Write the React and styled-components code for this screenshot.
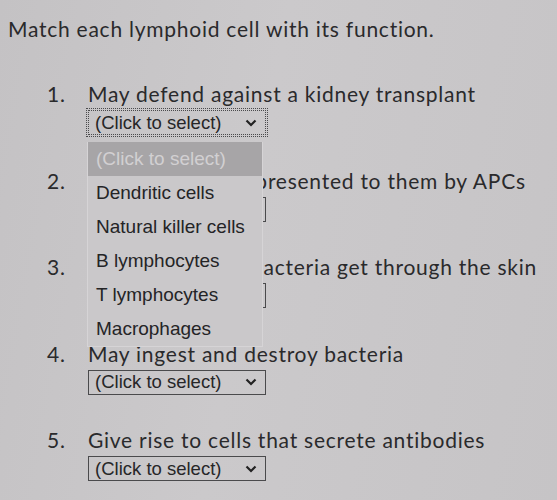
import React from 'react'
import styled, { createGlobalStyle } from 'styled-components'

const GlobalStyle = createGlobalStyle`
  html, body {
    margin: 0;
    padding: 0;
    background: #c7c5c7;
  }
`

const Page = styled.div`
  width: 557px;
  height: 500px;
  box-sizing: border-box;
  padding: 16px 0 0 8px;
  background: linear-gradient(100deg, #c4c2c4 0%, #cbc9cb 45%, #c6c4c6 100%);
  color: #2a2a2c;
  font-family: Lato, "Open Sans", sans-serif;
  overflow: hidden;
`

const Title = styled.h1`
  margin: 0;
  font-size: 21px;
  font-weight: 400;
  line-height: 26px;
  letter-spacing: 0.75px;
`

const List = styled.ol`
  list-style: none;
  margin: 39px 0 0 0;
  padding: 0 0 0 39px;
  display: flex;
  flex-direction: column;
  gap: 32.5px;
`

const Item = styled.li`
  display: flex;
  flex-direction: column;
  gap: 3px;
`

const Row = styled.div`
  display: flex;
  font-size: 21px;
  line-height: 26px;
  letter-spacing: 0.75px;
  white-space: nowrap;
`

const Num = styled.span`
  width: 41px;
  flex: none;
`

const SelectWrap = styled.div`
  position: relative;
  margin-left: 41px;
  width: 178px;
`

const SelectBox = styled.div`
  box-sizing: border-box;
  height: 25px;
  display: flex;
  align-items: center;
  justify-content: space-between;
  padding: 0 8px 0 6px;
  border: 1px ${p => (p.$focused ? 'dotted' : 'solid')} #4a4a4c;
  outline: ${p => (p.$focused ? '1px dotted #4a4a4c' : 'none')};
  outline-offset: 1px;
  font-family: "Liberation Sans", Arial, sans-serif;
  font-size: 18.5px;
  color: #262628;
`

const Chevron = styled.svg`
  width: 12px;
  height: 8px;
  flex: none;
`

const Menu = styled.ul`
  position: absolute;
  top: 32px;
  left: -1px;
  width: 176px;
  margin: 0;
  padding: 0;
  list-style: none;
  background: #cac8ca;
  border: 1px solid #d6d4d6;
  border-top: none;
  box-sizing: border-box;
  z-index: 2;
`

const Option = styled.li`
  height: 34px;
  line-height: 34px;
  padding-left: 8px;
  font-family: "Liberation Sans", Arial, sans-serif;
  font-size: 19px;
  white-space: nowrap;
  color: ${p => (p.$active ? '#d2d0d2' : '#242426')};
  background: ${p => (p.$active ? '#a7a5a7' : 'transparent')};
`

const options = [
  '(Click to select)',
  'Dendritic cells',
  'Natural killer cells',
  'B lymphocytes',
  'T lymphocytes',
  'Macrophages',
]

const items = [
  'May defend against a kidney transplant',
  'Bind to antigens presented to them by APCs',
  'Fight first when bacteria get through the skin',
  'May ingest and destroy bacteria',
  'Give rise to cells that secrete antibodies',
]

function Select({ focused, open }) {
  return (
    <SelectWrap>
      <SelectBox $focused={focused}>
        <span>(Click to select)</span>
        <Chevron viewBox="0 0 12 8">
          <path d="M1.5 1.5 L6 6 L10.5 1.5" fill="none" stroke="#222" strokeWidth="2.2" />
        </Chevron>
      </SelectBox>
      {open && (
        <Menu>
          {options.map((o, i) => (
            <Option key={o} $active={i === 0}>{o}</Option>
          ))}
        </Menu>
      )}
    </SelectWrap>
  )
}

export default function App() {
  return (
    <Page>
      <GlobalStyle />
      <Title>Match each lymphoid cell with its function.</Title>
      <List>
        {items.map((text, i) => (
          <Item key={i}>
            <Row>
              <Num>{i + 1}.</Num>
              <span>{text}</span>
            </Row>
            <Select focused={i === 0} open={i === 0} />
          </Item>
        ))}
      </List>
    </Page>
  )
}
